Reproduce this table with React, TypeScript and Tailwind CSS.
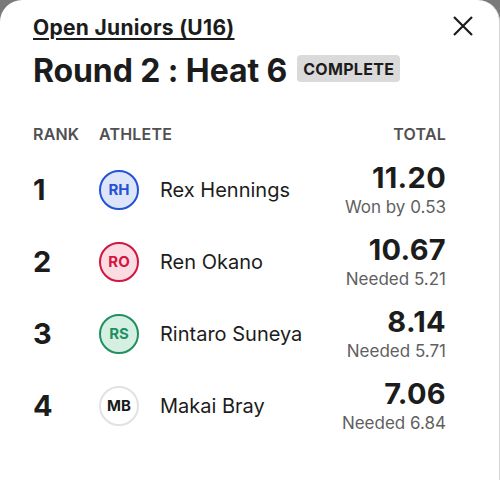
import React from "react";

type Row = {
    rank: number
    initials: string
    name: string
    total: string
    note: string
    ring: string
}

const rows: Row[] = [
    { rank: 1, initials: "RH", name: "Rex Hennings", total: "11.20", note: "Won by 0.53", ring: "border-[#2352d6] bg-[#dce5fa] text-[#2352d6]" },
    { rank: 2, initials: "RO", name: "Ren Okano", total: "10.67", note: "Needed 5.21", ring: "border-[#d3153f] bg-[#fbdce3] text-[#d3153f]" },
    { rank: 3, initials: "RS", name: "Rintaro Suneya", total: "8.14", note: "Needed 5.71", ring: "border-[#1f9160] bg-[#d5efe3] text-[#1f9160]" },
    { rank: 4, initials: "MB", name: "Makai Bray", total: "7.06", note: "Needed 6.84", ring: "border-[#e2e2e2] bg-white text-[#1a1a1a]" },
]

export default function App() {
    return (
        <div className="w-[500px] h-[480px] bg-[#7a7a7a] overflow-hidden" style={{ fontFamily: "Inter, Roboto, 'Noto Sans', sans-serif" }}>
            <div className="h-full bg-white rounded-t-[22px] border-r border-[#d4d4d4] pl-[33px] pr-[53px] pt-[14px] text-[#1c1c1c]">
                <div className="flex items-start justify-between">
                    <div>
                        <div className="text-[21px] leading-[28px] font-bold tracking-[0.3px] underline underline-offset-[3px] decoration-[1.5px]">
                            Open Juniors (U16)
                        </div>
                        <div className="flex items-start gap-[10px] mt-[10px]">
                            <h1 className="text-[32px] leading-[38px] font-bold tracking-[-0.1px]">Round 2 : Heat 6</h1>
                            <span className="mt-[3px] h-[27px] flex items-center bg-[#dadada] rounded-[4px] px-[6px] text-[16px] font-bold tracking-[0.3px]">COMPLETE</span>
                        </div>
                    </div>
                    <button className="mr-[-29px]">
                        <svg width="24" height="24" viewBox="0 0 24 24" className="text-[#1c1c1c]">
                            <path d="M3 3 L21 21 M21 3 L3 21" stroke="currentColor" strokeWidth="2.2" />
                        </svg>
                    </button>
                </div>

                <div className="flex items-center mt-[34px] h-[20px] text-[16px] font-semibold tracking-[0.2px] text-[#505050]">
                    <span className="w-[66px]">RANK</span>
                    <span className="flex-1">ATHLETE</span>
                    <span>TOTAL</span>
                </div>

                <div className="mt-[10px]">
                    {rows.map((r) => (
                        <div key={r.rank} className="flex items-center h-[72px]">
                            <span className="w-[66px] text-[29px] font-bold">{r.rank}</span>
                            <div className={`w-[40px] h-[40px] rounded-full border-[2.5px] flex items-center justify-center text-[15px] font-bold ${r.ring}`}>
                                {r.initials}
                            </div>
                            <span className="flex-1 ml-[21px] text-[20px]">{r.name}</span>
                            <div className="flex flex-col items-end">
                                <span className="text-[29px] leading-[30px] font-bold tracking-[0.3px]">{r.total}</span>
                                <span className="mt-[3px] text-[17px] leading-[22px] text-[#5f5f5f]">{r.note}</span>
                            </div>
                        </div>
                    ))}
                </div>
            </div>
        </div>
    )
}
